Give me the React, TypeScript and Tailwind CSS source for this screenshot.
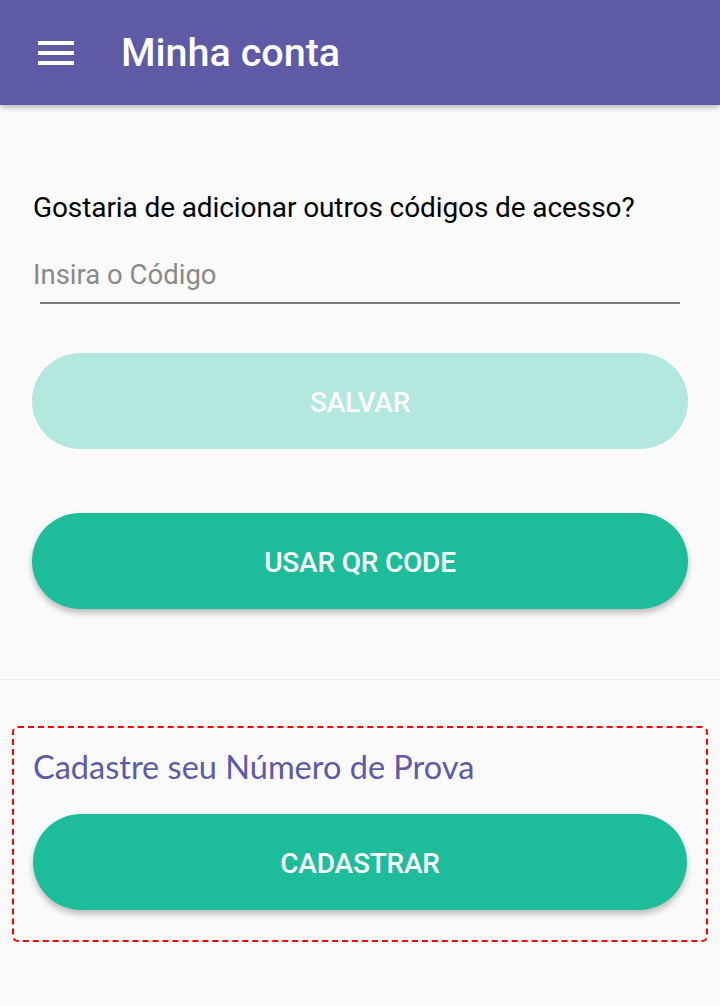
import React from 'react';

// Hamburger menu icon
const MenuIcon = () => (
  <svg width="36" height="24" viewBox="0 0 36 24" fill="#ffffff">
    <rect x="0" y="0" width="36" height="4" />
    <rect x="0" y="10" width="36" height="4" />
    <rect x="0" y="20" width="36" height="4" />
  </svg>
);

const PillButton = ({ label, disabled }: { label: string; disabled?: boolean }) => (
  <button
    className={`w-full h-[96px] pt-[3px] rounded-full flex items-center justify-center text-white text-[28px] font-medium tracking-[-0.2px] ${
      disabled ? 'bg-[#b2e8de]' : 'bg-[#1dbd9b] shadow-[0_4px_6px_rgba(0,0,0,0.25)]'
    }`}
    style={{ fontFamily: 'Roboto, sans-serif' }}
  >
    {label}
  </button>
);

export default function App() {
  return (
    <div className="w-[720px] h-[1006px] bg-[#fafafa] flex flex-col" style={{ fontFamily: 'Roboto, sans-serif' }}>
      {/* Toolbar */}
      <header className="h-[105px] bg-[#5e5aa6] flex items-center pl-[38px] shadow-[0_2px_6px_rgba(0,0,0,0.3)] z-10">
        <MenuIcon />
        <h1 className="ml-[47px] text-white text-[39.5px] font-medium leading-none">Minha conta</h1>
      </header>

      {/* Access code section */}
      <section className="px-[32px] pt-[88px] pb-[70px] border-b border-[#ececec]">
        <p className="text-[28px] text-black leading-[30px] pl-px tracking-[-0.1px]">Gostaria de adicionar outros códigos de acesso?</p>
        <div className="mt-[37px] pl-[8px] pr-[8px]">
          <div className="-ml-[7px] text-[27.5px] text-[#8a8a8a] leading-[30px]">Insira o Código</div>
          <div className="mt-[12px] h-[2px] bg-[#777777]" />
        </div>
        <div className="mt-[49px]">
          <PillButton label="SALVAR" disabled />
        </div>
        <div className="mt-[64px]">
          <PillButton label="USAR QR CODE" />
        </div>
      </section>

      {/* Register section */}
      <div className="px-[12px] pt-[46px]">
        <div className="border-2 border-dashed border-[#ff0000] rounded-[6px] px-[19px] pt-[20px] pb-[30px]">
          <h2 className="text-[#5e5aa6] text-[32.5px] leading-[38px]" style={{ fontFamily: 'Lato, sans-serif' }}>
            Cadastre seu Número de Prova
          </h2>
          <div className="mt-[28px]">
            <PillButton label="CADASTRAR" />
          </div>
        </div>
      </div>
    </div>
  );
}
